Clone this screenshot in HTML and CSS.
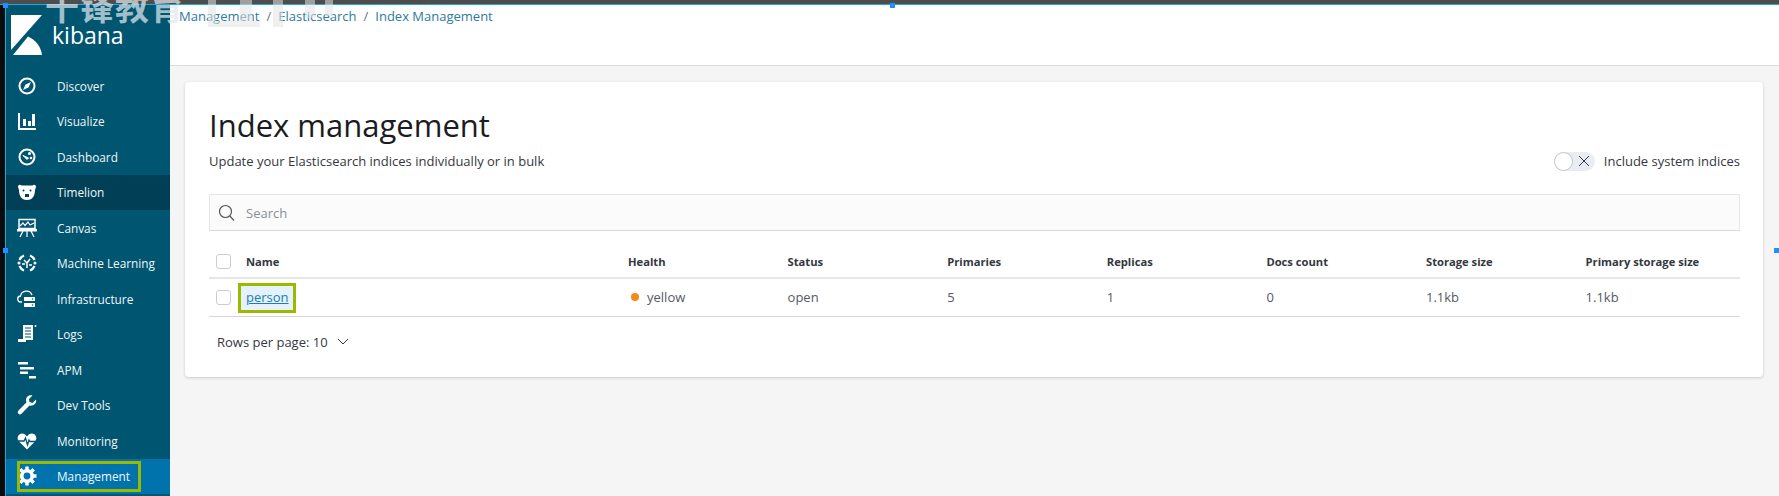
FILE: index.html
```html
<!DOCTYPE html>
<html lang="en">
<head>
  <meta charset="UTF-8">
  <title>Index Management - Kibana</title>
  <link rel="stylesheet" href="styles.css">
</head>
<body>

  <div class="topbar"></div>

  <div class="app">
    <nav class="sidebar">
      <div class="logo">
        <svg class="logo-mark" width="31" height="40" viewBox="0 0 31 40">
          <path d="M0 0H31L0 35Z" fill="#fff"/>
          <path d="M2 40L17 21.500C25 25 30 32 31 40Z" fill="#fff"/>
        </svg>
        <span class="logo-text">kibana</span>
      </div>

      <a class="nav-item">
        <svg class="nav-icon" viewBox="0 0 20 20"><circle cx="10" cy="10" r="7.500" fill="none" stroke="#fff" stroke-width="2"/><path d="M14 6L11.500 11.500L6 14L8.500 8.500Z" fill="#fff"/></svg>
        Discover
      </a>
      <a class="nav-item">
        <svg class="nav-icon" viewBox="0 0 20 20"><path d="M2 2V18H19" fill="none" stroke="#fff" stroke-width="2"/><path d="M6 8H9V15H6ZM11 10H14V15H11ZM15 3H18V15H15Z" fill="#fff"/></svg>
        Visualize
      </a>
      <a class="nav-item">
        <svg class="nav-icon" viewBox="0 0 20 20"><circle cx="10" cy="10" r="7.500" fill="none" stroke="#fff" stroke-width="2"/><path d="M6 8.500L10 12.500L11.500 11Z" fill="#fff" stroke="#fff"/><circle cx="12.500" cy="6.500" r="1.500" fill="#fff"/><circle cx="14" cy="11" r="1.300" fill="#fff"/></svg>
        Dashboard
      </a>
      <a class="nav-item dark">
        <svg class="nav-icon" viewBox="0 0 20 20"><path d="M1 5C1 3 3 2 4.500 3.500H15.500C17 2 19 3 19 5L18 8C18 13 16 18 10 18C4 18 2 13 2 8Z" fill="#fff"/><circle cx="6.500" cy="8.500" r="1" fill="#003f56"/><circle cx="13.500" cy="8.500" r="1" fill="#003f56"/><path d="M8 12H12V15H8Z" fill="#003f56"/></svg>
        Timelion
      </a>
      <a class="nav-item">
        <svg class="nav-icon" viewBox="0 0 20 20"><path d="M2 1.500H18V10.500H2Z" fill="none" stroke="#fff" stroke-width="1.500"/><path d="M3 8L6 5L8 7.500L11 4L13 7L17 5" fill="none" stroke="#fff" stroke-width="1.200"/><path d="M0 11.500H20V13H0ZM6 13L3 19M10 13V19M14 13L17 19" fill="#fff" stroke="#fff" stroke-width="1.200"/></svg>
        Canvas
      </a>
      <a class="nav-item">
        <svg class="nav-icon" viewBox="0 0 20 20"><path d="M7 2.500A8 8 0 0 0 2.500 7M13 2.500A8 8 0 0 1 17.500 7M2.500 13A8 8 0 0 0 7 17.500M17.500 13A8 8 0 0 1 13 17.500" fill="none" stroke="#fff" stroke-width="2.200"/><path d="M7 7L10 10L13 6M10 10V15M5 11H8M12 12L15 12" fill="none" stroke="#fff" stroke-width="1.500"/><circle cx="2" cy="10" r="1.500" fill="#fff"/><circle cx="18" cy="10" r="1.500" fill="#fff"/></svg>
        Machine Learning
      </a>
      <a class="nav-item">
        <svg class="nav-icon" viewBox="0 0 20 20"><path d="M5 13H4A3 3 0 0 1 3.500 7A6 6 0 0 1 15 6" fill="none" stroke="#fff" stroke-width="1.300"/><path d="M7 8H18V12H7ZM7 14H18V18H7Z" fill="#fff"/><circle cx="15.500" cy="10" r=".8" fill="#005571"/><circle cx="15.500" cy="16" r=".8" fill="#005571"/></svg>
        Infrastructure
      </a>
      <a class="nav-item">
        <svg class="nav-icon" viewBox="0 0 20 20"><path d="M6 1H16V16H6Z" fill="#fff"/><path d="M8 4H14M8 7H14M8 10H14M8 13H14" stroke="#005571" stroke-width="1.200"/><path d="M1 15H9V18H1Z" fill="#fff"/><circle cx="18.500" cy="2" r="1" fill="#fff"/></svg>
        Logs
      </a>
      <a class="nav-item">
        <svg class="nav-icon" viewBox="0 0 20 20"><path d="M1 2H11V4.500H1ZM3 7H17V9.500H3ZM3 11.500H11V14H3ZM12 16H19V18.500H12Z" fill="#fff"/></svg>
        APM
      </a>
      <a class="nav-item">
        <svg class="nav-icon" viewBox="0 0 20 20"><path d="M19 4.500L15.500 8L12.500 7L12 4L15.500 .5C12.500 -.5 9 1.500 9 5C9 6 9.200 6.500 9.500 7.200L1.500 15.500C.5 16.500 .5 18 1.500 18.800C2.500 19.800 3.800 19.500 4.500 18.800L12.500 10.500C16 11.500 20 8.500 19 4.500Z" fill="#fff"/></svg>
        Dev Tools
      </a>
      <a class="nav-item">
        <svg class="nav-icon" viewBox="0 0 20 20"><path d="M10 18.500L2 10.500C-.5 8 .5 2.500 5 2.500C7.500 2.500 9 4 10 5.500C11 4 12.500 2.500 15 2.500C19.500 2.500 20.500 8 18 10.500Z" fill="#fff"/><path d="M1 10H7L8.500 7L10.500 14L12 9L13 10.500H19" fill="none" stroke="#005571" stroke-width="1.300"/></svg>
        Monitoring
      </a>
      <a class="nav-item active">
        <svg class="nav-icon" viewBox="0 0 20 20"><circle cx="10" cy="10" r="5.200" fill="none" stroke="#fff" stroke-width="3.600"/><path d="M10 .5V4M10 16V19.500M.5 10H4M16 10H19.500M3.300 3.300L5.800 5.800M14.200 14.200L16.700 16.700M16.700 3.300L14.200 5.800M5.800 14.200L3.300 16.700" stroke="#fff" stroke-width="3.400"/></svg>
        <span class="highlight-nav">Management</span>
      </a>
    </nav>

    <div class="content">
      <header class="breadcrumbs">
        <a>Management</a><span class="sep">/</span><a>Elasticsearch</a><span class="sep">/</span><a>Index Management</a>
      </header>

      <main class="main">
        <section class="panel">
          <h1>Index management</h1>

          <div class="subtitle-row">
            <p>Update your Elasticsearch indices individually or in bulk</p>
            <div class="switch-wrap">
              <span class="switch">
                <span class="knob"></span>
                <svg width="12" height="12" viewBox="0 0 12 12"><path d="M1 1L11 11M11 1L1 11" stroke="#343741" stroke-width="1"/></svg>
              </span>
              Include system indices
            </div>
          </div>

          <div class="search">
            <svg width="18" height="18" viewBox="0 0 18 18"><circle cx="7.500" cy="7.500" r="6" fill="none" stroke="#555" stroke-width="1.200"/><path d="M11.800 12L16 16.500" stroke="#555" stroke-width="1.200"/></svg>
            <span>Search</span>
          </div>

          <table class="indices">
            <thead>
              <tr>
                <th class="check-col"><span class="checkbox"></span></th>
                <th class="name-col">Name</th>
                <th>Health</th>
                <th>Status</th>
                <th>Primaries</th>
                <th>Replicas</th>
                <th>Docs count</th>
                <th>Storage size</th>
                <th class="last-col">Primary storage size</th>
              </tr>
            </thead>
            <tbody>
              <tr>
                <td class="check-col"><span class="checkbox"></span></td>
                <td class="name-col"><a class="person">person</a></td>
                <td><span class="dot"></span>yellow</td>
                <td>open</td>
                <td>5</td>
                <td>1</td>
                <td>0</td>
                <td>1.1kb</td>
                <td>1.1kb</td>
              </tr>
            </tbody>
          </table>

          <div class="pager">
            Rows per page: 10
            <svg width="12" height="8" viewBox="0 0 12 8"><path d="M1 1L6 6L11 1" fill="none" stroke="#343741" stroke-width="1"/></svg>
          </div>
        </section>
      </main>
    </div>
  </div>

  <!-- marca d'agua e alcas de selecao por cima da captura -->
  <div class="watermark">千锋教育</div>
  <svg class="watermark-low" width="130" height="28" viewBox="0 0 130 28">
    <path d="M3 0H11V27H3ZM3 21H55V27H3ZM35 0H47V24H35ZM68 0H78V27H68ZM100 0H110V18H100ZM120 0H128V16H120Z"/>
  </svg>
  <span class="handle handle-a"></span>
  <span class="handle handle-b"></span>
  <span class="handle handle-c"></span>
  <span class="handle handle-d"></span>

</body>
</html>
```

FILE: styles.css
```css
* {
  box-sizing: border-box;
}

html, body {
  height: 100%;
}

body {
  margin: 0;
  height: 496px;
  overflow: hidden;
  position: relative;
  display: flex;
  flex-direction: column;
  font-family: "Open Sans", sans-serif;
  font-size: 13px;
  color: #343741;
  background-color: #f5f5f5;
}

.topbar {
  height: 5px;
  flex-shrink: 0;
  background-color: #4d4d4d;
  border-bottom: 1px solid #1ea7e1;
}

.app {
  flex: 1;
  display: flex;
  min-height: 0;
  border-left: 5px solid #0b0b0b;
}

.sidebar {
  width: 165px;
  flex-shrink: 0;
  background-color: #005571;
  border-left: 1px solid #1ea7e1;
  color: #fff;
}

.logo {
  height: 63px;
  display: flex;
  align-items: center;
  padding: 0 0 3px 5px;
  gap: 10px;
}

.logo-text {
  font-size: 23px;
  line-height: 26px;
  font-weight: 500;
}

.nav-item {
  height: 35.5px;
  display: flex;
  align-items: center;
  padding-left: 11px;
  gap: 20px;
  font-size: 11.800px;
  color: #f2f6f8;
}

.nav-icon {
  width: 20px;
  height: 20px;
  flex-shrink: 0;
}

.dark {
  background-color: #003f56;
}

.active {
  background-color: #0073ad;
  position: relative;
}

.highlight-nav::before {
  content: "";
  box-sizing: border-box;
  position: absolute;
  left: 11px;
  top: 2px;
  width: 124px;
  height: 31px;
  border: 3px solid #9cb900;
}

.content {
  flex: 1;
  min-width: 0;
  display: flex;
  flex-direction: column;
}

.breadcrumbs {
  height: 61px;
  flex-shrink: 0;
  padding: 1px 0 0 9px;
  background-color: #fff;
  border-bottom: 1px solid #d9dbde;
  line-height: 20px;
}

.breadcrumbs a {
  color: #2d7b9b;
}

.sep {
  margin: 0 7px;
  color: #69707d;
}

.main {
  flex: 1;
  padding: 16px 16px 0 15px;
}

.panel {
  height: 295px;
  padding: 24px 23px 0 24px;
  background-color: #fff;
  border-radius: 4px;
  box-shadow: 0 1px 3px rgba(65, 78, 101, .25);
}

h1 {
  margin: 0;
  font-size: 31px;
  line-height: 38px;
  font-weight: 500;
  color: #1a1c21;
}

.subtitle-row {
  display: flex;
  justify-content: space-between;
  align-items: center;
  margin-top: 5px;
  height: 24px;
}

.subtitle-row p {
  margin: 0;
}

.switch-wrap {
  display: flex;
  align-items: center;
  gap: 9px;
}

.switch {
  width: 41px;
  height: 19px;
  display: flex;
  align-items: center;
  justify-content: flex-end;
  padding-right: 5px;
  border-radius: 10px;
  background-color: #e9edf3;
  position: relative;
}

.knob {
  position: absolute;
  left: 0;
  top: 0;
  width: 19px;
  height: 19px;
  border-radius: 50%;
  background-color: #fff;
  border: 1px solid #c2c8d2;
}

.search {
  height: 37px;
  margin-top: 21px;
  display: flex;
  align-items: center;
  gap: 10px;
  padding-left: 8px;
  background-color: #fbfbfb;
  border: 1px solid #e4e6ea;
  border-bottom-color: #d6d9de;
  color: #8a8f98;
}

.indices {
  width: 100%;
  margin-top: 14px;
  border-collapse: collapse;
  table-layout: fixed;
}

.indices th, .indices td {
  padding: 0;
  text-align: left;
}

.indices th {
  width: 159.600px;
  height: 33px;
  font-size: 11.200px;
  font-weight: 700;
  color: #343741;
  border-bottom: 2px solid #e4e6ea;
}

.indices td {
  height: 38px;
  font-size: 13px;
  color: #555a64;
  border-bottom: 1px solid #d3d6dc;
}

.indices .check-col {
  width: 37px;
  padding-left: 7px;
}

.indices .name-col {
  width: 382px;
}

.indices .last-col {
  width: auto;
}

.checkbox {
  display: block;
  width: 15px;
  height: 15px;
  border-radius: 3px;
  border: 1px solid #c9cdd4;
  background-color: #fff;
}

.person {
  display: inline-block;
  position: relative;
  color: #1f7fb0;
  text-decoration: underline;
}

.person::before {
  content: "";
  position: absolute;
  left: -8px;
  top: -5px;
  right: -7px;
  bottom: -7px;
  border: 3px solid #9cb900;
  background-color: rgba(0, 120, 220, .1);
}

.dot {
  display: inline-block;
  width: 8px;
  height: 8px;
  margin: 0 8px 1px 3px;
  border-radius: 50%;
  background-color: #f58b13;
}

.pager {
  margin-top: 15px;
  padding-left: 8px;
  display: flex;
  align-items: center;
  gap: 9px;
  line-height: 20px;
}

.watermark, .watermark-low {
  position: absolute;
  pointer-events: none;
}

.watermark {
  left: 45px;
  top: -17px;
  font-family: "Noto Sans CJK SC", sans-serif;
  font-weight: 700;
  font-size: 34px;
  line-height: 46px;
  letter-spacing: 1px;
  color: rgba(225, 232, 236, .72);
}

.watermark-low {
  left: 205px;
  top: 0;
  fill: rgba(228, 228, 228, .55);
}

.handle {
  position: absolute;
  width: 5px;
  height: 5px;
  background-color: #1e90ff;
}

.handle-a {
  left: 3px;
  top: 3px;
}

.handle-b {
  left: 3px;
  top: 248px;
}

.handle-c {
  left: 890px;
  top: 3px;
}

.handle-d {
  right: 0;
  top: 248px;
}
```
